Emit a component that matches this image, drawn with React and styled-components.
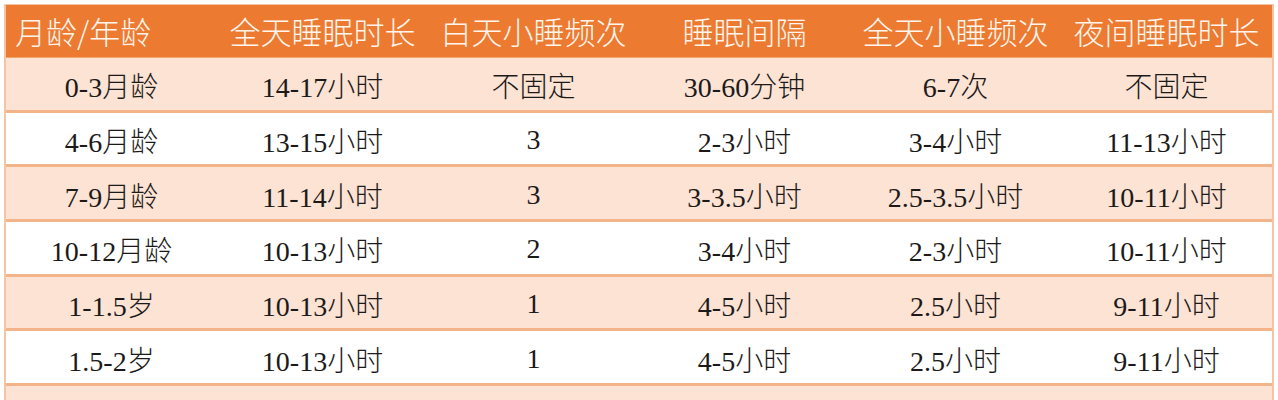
import React from 'react';
import styled, { createGlobalStyle } from 'styled-components';

const GlobalStyle = createGlobalStyle`
  html, body {
    margin: 0;
    padding: 0;
    background: #ffffff;
  }
`;

const headers = ['月龄/年龄', '全天睡眠时长', '白天小睡频次', '睡眠间隔', '全天小睡频次', '夜间睡眠时长'];

const rows = [
  ['0-3月龄', '14-17小时', '不固定', '30-60分钟', '6-7次', '不固定'],
  ['4-6月龄', '13-15小时', '3', '2-3小时', '3-4小时', '11-13小时'],
  ['7-9月龄', '11-14小时', '3', '3-3.5小时', '2.5-3.5小时', '10-11小时'],
  ['10-12月龄', '10-13小时', '2', '3-4小时', '2-3小时', '10-11小时'],
  ['1-1.5岁', '10-13小时', '1', '4-5小时', '2.5小时', '9-11小时'],
  ['1.5-2岁', '10-13小时', '1', '4-5小时', '2.5小时', '9-11小时'],
  ['2-3岁', '11-14小时', '1', '5-6小时', '2.5小时', '10-11小时'],
];

const App = () => {
  return (
    <>
      <GlobalStyle />
      <Page>
        <Table>
          <HeaderRow>
            {headers.map((h, i) => (
              <HeaderCell key={h} first={i === 0}>{h}</HeaderCell>
            ))}
          </HeaderRow>
          {rows.map((r, i) => (
            <Row key={r[0]} shaded={i % 2 === 0}>
              {r.map((c, j) => (
                <Cell key={j}>{c}</Cell>
              ))}
            </Row>
          ))}
        </Table>
      </Page>
    </>
  );
};

const Page = styled.div`
  padding: 4px 0 0 4px;
  height: 400px;
  overflow: hidden;
  box-sizing: border-box;
`;

const Table = styled.div`
  width: 1270px;
  border: 2px solid #f6c4a2;
  border-top-width: 1px;
  box-sizing: border-box;
  display: flex;
  flex-direction: column;
`;

const HeaderRow = styled.div`
  display: grid;
  grid-template-columns: repeat(6, 1fr);
  height: 53px;
  background: #ec7a31;
  border-bottom: 1px solid #f2a46c;
  box-sizing: border-box;
`;

const HeaderCell = styled.div`
  display: flex;
  align-items: center;
  justify-content: ${(p) => (p.first ? 'flex-start' : 'center')};
  padding-left: ${(p) => (p.first ? '9px' : '0')};
  padding-bottom: 2px;
  color: #fff5ec;
  font-family: "Noto Sans CJK SC", "Noto Sans", sans-serif;
  font-weight: 300;
  font-size: 31px;
  white-space: nowrap;
`;

const Row = styled.div`
  display: grid;
  grid-template-columns: repeat(6, 1fr);
  height: 54.7px;
  background: ${(p) => (p.shaded ? '#fce3d4' : '#ffffff')};
  border-bottom: 3px solid #f3b48a;
  box-sizing: border-box;
  flex-shrink: 0;
`;

const Cell = styled.div`
  display: flex;
  align-items: center;
  justify-content: center;
  padding-top: 3px;
  color: #1c1a19;
  font-family: "Liberation Serif", "Noto Sans CJK SC", serif;
  font-weight: 300;
  font-size: 28px;
  white-space: nowrap;
`;

export default App;
